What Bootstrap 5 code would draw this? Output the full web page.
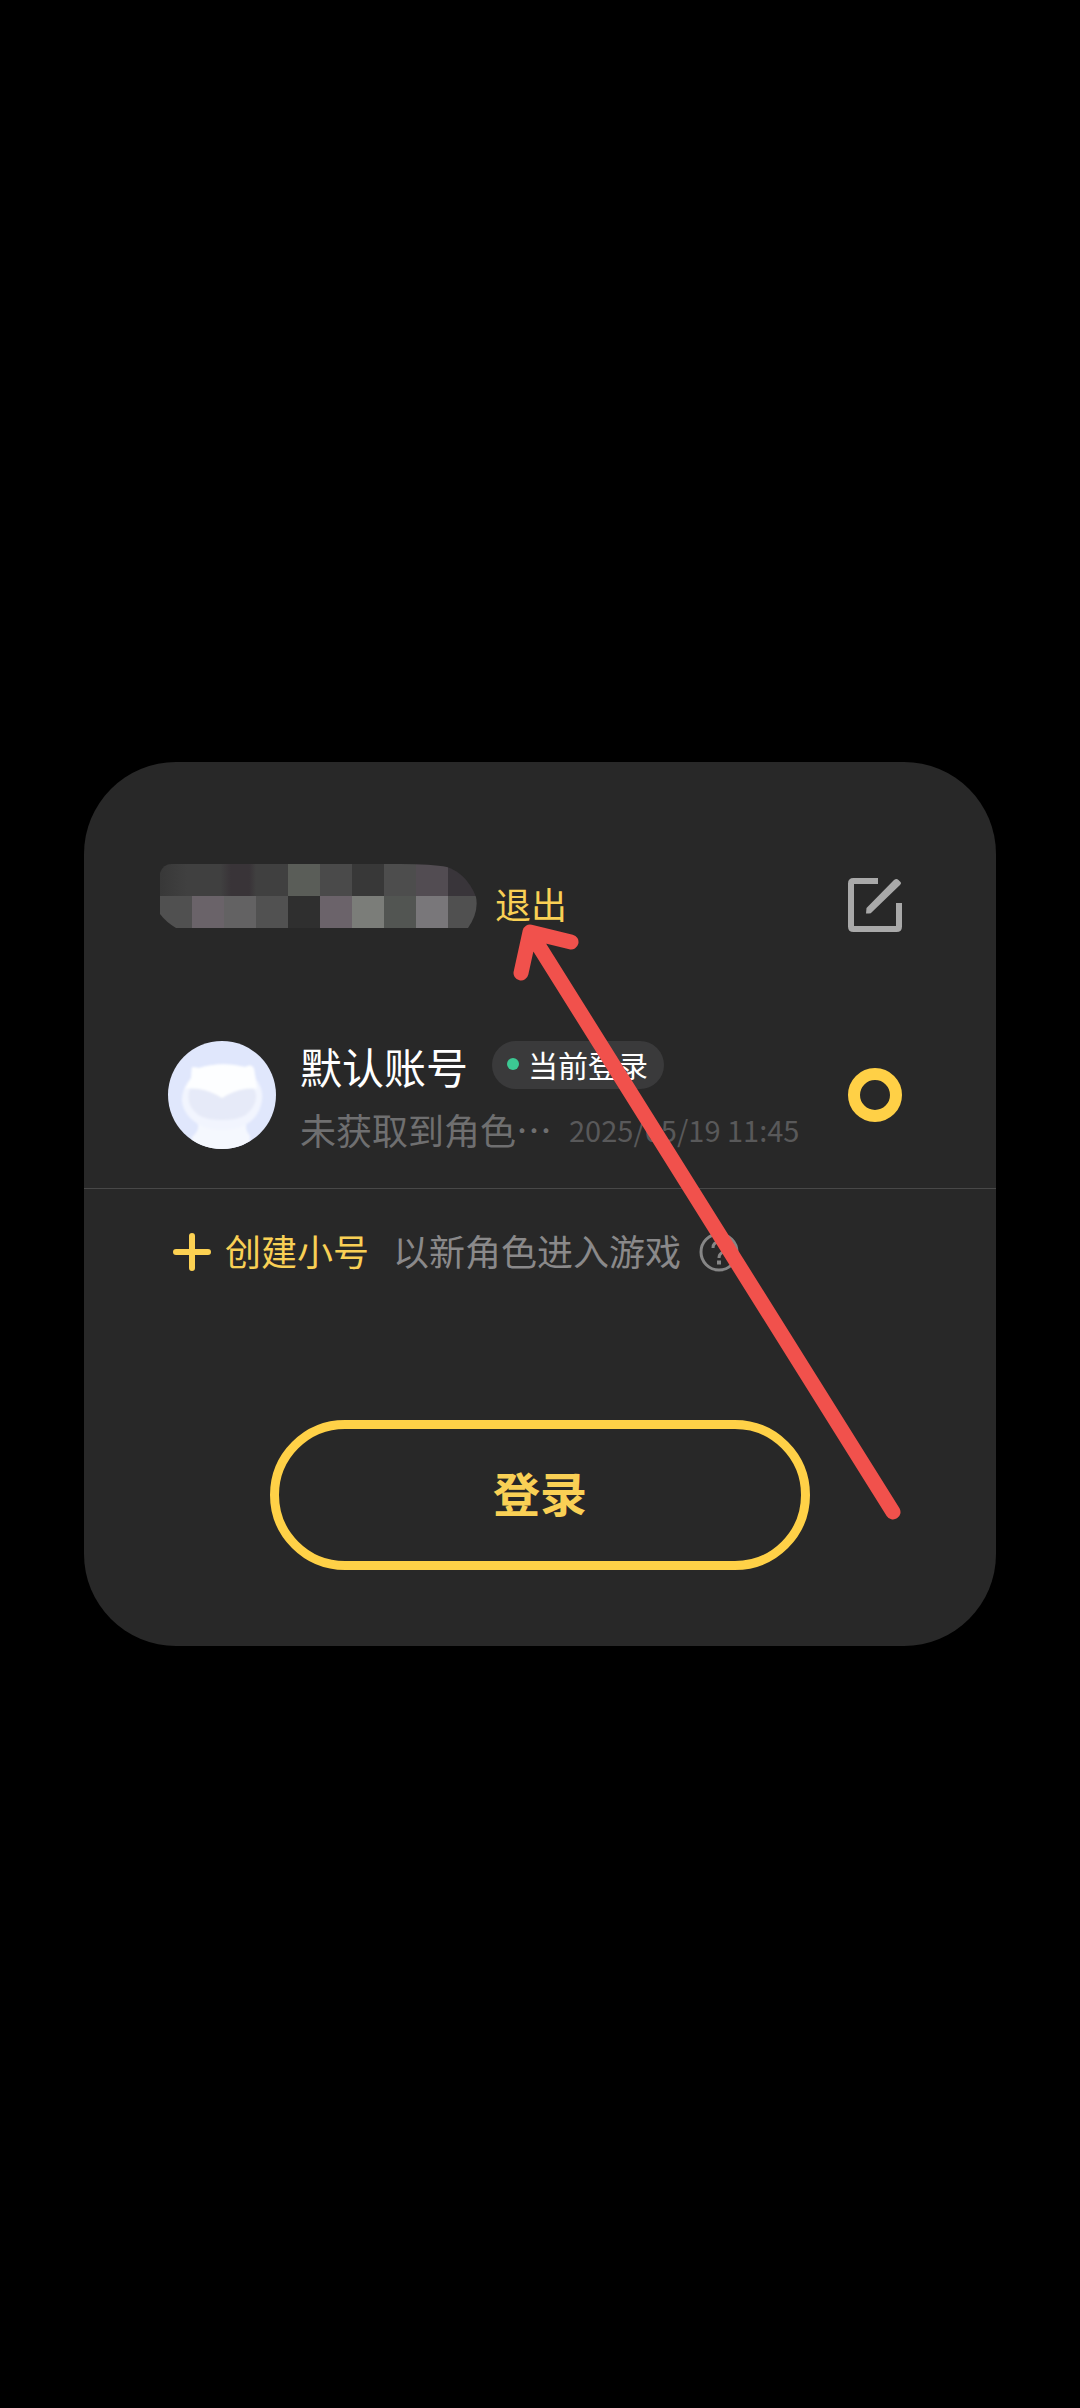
<!DOCTYPE html>
<html lang="zh-CN">
<head>
<meta charset="utf-8">
<meta name="viewport" content="width=device-width, initial-scale=1">
<title>登录</title>
<link rel="stylesheet" href="https://cdn.jsdelivr.net/npm/bootstrap@5.3.0/dist/css/bootstrap.min.css">
<style>
  body { background: #000; color: #fff; font-family: "Noto Sans CJK SC", "Noto Sans", sans-serif; font-size: 36px; line-height: 48px; }
  svg { display: block; flex: none; }
  .login-panel { width: 100%; max-width: 912px; background: #282828; border-radius: 92px; padding: 102px 0 76px; }
  .top-bar { height: 82px; padding: 0 94px 0 76px; }
  .user-mask { margin-bottom: 18px; }
  .logout-link { margin-left: 18px; padding-bottom: 4px; }
  .gold { color: #f9d055; }
  .account-row { padding: 95px 94px 39px 84px; border-bottom: 1px solid #484848; }
  .account-text { margin-left: 24px; }
  .account-name { font-size: 42px; padding-top: 2px; line-height: 46px; }
  .status-pill { background: #3a3a3b; font-size: 30px; font-weight: 400; line-height: 46px; height: 48px; padding: 0 16px 2px 15px; gap: 9px; color: #fff; }
  .status-dot { width: 12px; height: 12px; background: #3cc893; }
  .account-sub { line-height: 40px; margin-top: 20px; color: #6f6f70; }
  .account-sub time { font-size: 29px; margin-left: 17px; color: #59595a; }
  .account-radio { appearance: none; width: 54px; height: 54px; border: 12px solid #ffd046; border-radius: 50%; background: transparent; }
  .create-row { padding: 39px 84px 0 89px; }
  .create-row span { padding-bottom: 4px; line-height: 44px; }
  .create-label { margin-left: 14px; }
  .hint { margin-left: 24px; color: #8a898a; }
  .help-btn { margin-left: 18px; }
  .login-btn { width: 540px; max-width: 90%; height: 150px; margin-top: 144px; padding: 0 0 6px; border: 9px solid #ffd147; font-size: 47px; font-weight: 700; line-height: 60px; }
  .login-btn:hover { border-color: #ffd147; color: #f9d055; }
  .pointer-mark { pointer-events: none; }
</style>
<script src="https://cdn.jsdelivr.net/npm/bootstrap@5.3.0/dist/js/bootstrap.bundle.min.js"></script>
</head>
<body>
<div class="min-vh-100 d-flex align-items-center justify-content-center">
  <main class="login-panel position-relative">
    <header class="top-bar d-flex align-items-center">
      <svg class="user-mask" width="317" height="64" viewBox="0 0 317 64" role="img" aria-label="隐藏的账号">
        <defs>
          <clipPath id="maskShape"><path d="M0 9Q3 0 12 0H240Q272 0 287 3C305 9 313 25 316 33Q319 48 308 64H16Q6 58 0 50Z"/></clipPath>
          <linearGradient id="maskBlend"><stop offset="0" stop-color="#383838"/><stop offset=".28" stop-color="#404040"/><stop offset=".63" stop-color="#404040"/><stop offset=".74" stop-color="#393438"/><stop offset=".93" stop-color="#393438"/><stop offset="1" stop-color="#404040"/></linearGradient>
        </defs>
        <g clip-path="url(#maskShape)" shape-rendering="crispEdges">
          <path fill="url(#maskBlend)" d="M0 0h96v32H0z"/>
          <path fill="#404040" d="M96 0h32v32H96z"/>
          <path fill="#5a5d58" d="M128 0h32v32h-32z"/>
          <path fill="#4a4a4a" d="M160 0h32v32h-32z"/>
          <path fill="#383838" d="M192 0h32v32h-32z"/>
          <path fill="#4d4d4d" d="M224 0h32v32h-32z"/>
          <path fill="#524c52" d="M256 0h32v32h-32z"/>
          <path fill="#39353a" d="M288 0h32v32h-32z"/>
          <path fill="#505050" d="M0 32h32v32H0z"/>
          <path fill="#6a6369" d="M32 32h32v32H32z"/>
          <path fill="#636263" d="M64 32h32v32H64z"/>
          <path fill="#515151" d="M96 32h32v32H96z"/>
          <path fill="#2f2f2f" d="M128 32h32v32h-32z"/>
          <path fill="#6b636a" d="M160 32h32v32h-32z"/>
          <path fill="#7b7d79" d="M192 32h32v32h-32z"/>
          <path fill="#525552" d="M224 32h32v32h-32z"/>
          <path fill="#79777a" d="M256 32h32v32h-32z"/>
          <path fill="#505050" d="M288 32h32v32h-32z"/>
        </g>
      </svg>
      <a href="#" class="logout-link gold text-decoration-none">退出</a>
      <button type="button" class="btn p-0 border-0 ms-auto" aria-label="编辑">
        <svg width="54" height="54" viewBox="0 0 54 54">
          <path d="M30 3H5.500Q3 3 3 5.500V48.500Q3 51 5.500 51H48.500Q51 51 51 48.500V25" fill="none" stroke="#a9a9a9" stroke-width="6"/>
          <path d="M18.500 30 46 2Q48.500 0 50.500 2L52 3.500Q54 5 52 7L24 34Q23 35.500 21 35.500H18Z" fill="#a9a9a9"/>
        </svg>
      </button>
    </header>

    <section class="account-row d-flex align-items-center">
      <svg width="108" height="108" viewBox="0 0 108 108" role="img" aria-label="头像">
        <defs>
          <clipPath id="avatarRound"><circle cx="54" cy="54" r="54"/></clipPath>
          <filter id="soft"><feGaussianBlur stdDeviation="1.200"/></filter>
        </defs>
        <g clip-path="url(#avatarRound)">
          <path fill="#e0e7fc" d="M0 0h108v108H0z"/>
          <g filter="url(#soft)">
            <path fill="#f5f8fe" d="M28 80H80Q75 86 82 95V112H24V96Q34 87 28 80Z"/>
            <path fill="#f2f5fe" d="M24 26Q28 26 31 27Q54 20 77 26Q84 22 86 28L88 38Q97 50 93 64Q88 82 69 87Q54 91 39 87Q17 79 14 61Q13 48 23 37Z"/>
            <path fill="#e6eaf8" d="M22 48H86Q90 55 86 64Q80 76 67 78Q54 80 41 78Q28 76 22 64Q19 55 22 48Z"/>
            <path fill="#fdfeff" d="M24 26Q29 27 31 27Q54 20 77 26Q84 22 86 28L89 48Q83 46 77 48Q65 50 54 57Q43 50 31 48Q24 46 17 48L23 37Z"/>
          </g>
        </g>
      </svg>
      <div class="account-text flex-grow-1">
        <div class="d-flex align-items-center">
          <label for="defaultAccount" class="account-name">默认账号</label>
          <span class="status-pill badge rounded-pill d-flex align-items-center ms-4"><span class="status-dot rounded-circle"></span>当前登录</span>
        </div>
        <div class="account-sub d-flex align-items-center">
          <span>未获取到角色…</span>
          <time datetime="2025-05-19T11:45">2025/05/19 11:45</time>
        </div>
      </div>
      <input class="account-radio flex-shrink-0 m-0" type="radio" name="account" id="defaultAccount" checked>
    </section>

    <section class="create-row d-flex align-items-center">
      <a href="#" class="gold text-decoration-none d-flex align-items-center">
        <svg width="38" height="38" viewBox="0 0 38 38" aria-hidden="true"><path d="M19 3V35M3 19H35" stroke="#fcd152" stroke-width="6" stroke-linecap="round"/></svg>
        <span class="create-label">创建小号</span>
      </a>
      <span class="hint">以新角色进入游戏</span>
      <button type="button" class="help-btn btn p-0 border-0" aria-label="帮助">
        <svg width="40" height="40" viewBox="0 0 40 40"><circle cx="20" cy="20" r="18" fill="none" stroke="#868686" stroke-width="3"/><path d="M14 16Q14 10 20 10T26 16Q26 19 22.500 21Q20 22.500 20 26" fill="none" stroke="#868686" stroke-width="3"/><path d="M18 28.500h4v4h-4z" fill="#868686"/></svg>
      </button>
    </section>

    <button type="button" class="login-btn btn gold rounded-pill d-block mx-auto">登录</button>

    <svg class="pointer-mark position-absolute top-0 start-0 w-100 h-100" viewBox="0 0 912 884" aria-hidden="true">
      <path d="M809 750 446 170M437 211 446 170 487 180" fill="none" stroke="#f1514c" stroke-width="15" stroke-linecap="round" stroke-linejoin="round"/>
    </svg>
  </main>
</div>
</body>
</html>
